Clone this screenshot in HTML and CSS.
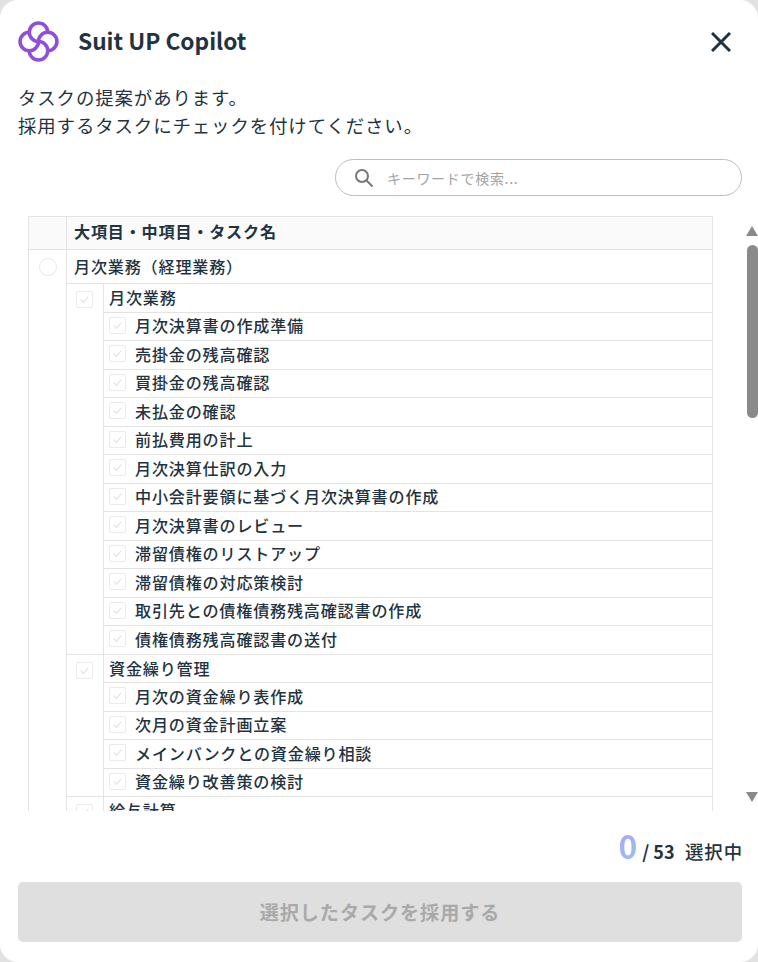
FILE: index.html
```html
<!DOCTYPE html>
<html lang="ja">
<head>
<meta charset="utf-8">
<title>Suit UP Copilot</title>
<link rel="stylesheet" href="styles.css">
</head>
<body>
<main class="modal">
  <header class="head">
    <svg class="logo" viewBox="0 0 40 40" fill="none" stroke="#8f4fdc" stroke-width="3.5" stroke-linecap="round">
      <path d="M29 11A9 9 0 1 0 20 20"/>
      <path d="M29 29A9 9 0 1 0 20 20"/>
      <path d="M11 29A9 9 0 1 0 20 20"/>
      <path d="M11 11A9 9 0 1 0 20 20"/>
    </svg>
    <h1 class="title">Suit UP Copilot</h1>
    <svg class="close" viewBox="0 0 20 20" fill="none" stroke="#1f3340" stroke-width="3"><path d="M1 1L19 19M19 1L1 19"/></svg>
  </header>
  <p class="lead">タスクの提案があります。<br>採用するタスクにチェックを付けてください。</p>
  <div class="search-row">
    <div class="search">
      <svg class="search-icon" viewBox="0 0 20 20" fill="none" stroke="#777" stroke-width="2"><circle cx="8" cy="8" r="6"/><path d="M12.5 12.5L18.5 18.5"/></svg>
      <span class="placeholder">キーワードで検索...</span>
    </div>
  </div>
  <div class="body">
    <div class="scroller">
      <div class="table">
        <div class="thead"><div class="th-blank"></div><div class="th">大項目・中項目・タスク名</div></div>
        <div class="major">
          <div class="major-check"><span class="radio"></span></div>
          <div class="major-body">
            <div class="major-title">月次業務（経理業務）</div>
            <div class="mid">
              <div class="mid-check"><span class="box"><svg viewBox="0 0 16 16"><path d="M4 8l3 3 5-6"/></svg></span></div>
              <div class="mid-body">
                <div class="mid-title">月次業務</div>
                <div class="task"><span class="box"><svg viewBox="0 0 16 16"><path d="M4 8l3 3 5-6"/></svg></span>月次決算書の作成準備</div>
                <div class="task"><span class="box"><svg viewBox="0 0 16 16"><path d="M4 8l3 3 5-6"/></svg></span>売掛金の残高確認</div>
                <div class="task"><span class="box"><svg viewBox="0 0 16 16"><path d="M4 8l3 3 5-6"/></svg></span>買掛金の残高確認</div>
                <div class="task"><span class="box"><svg viewBox="0 0 16 16"><path d="M4 8l3 3 5-6"/></svg></span>未払金の確認</div>
                <div class="task"><span class="box"><svg viewBox="0 0 16 16"><path d="M4 8l3 3 5-6"/></svg></span>前払費用の計上</div>
                <div class="task"><span class="box"><svg viewBox="0 0 16 16"><path d="M4 8l3 3 5-6"/></svg></span>月次決算仕訳の入力</div>
                <div class="task"><span class="box"><svg viewBox="0 0 16 16"><path d="M4 8l3 3 5-6"/></svg></span>中小会計要領に基づく月次決算書の作成</div>
                <div class="task"><span class="box"><svg viewBox="0 0 16 16"><path d="M4 8l3 3 5-6"/></svg></span>月次決算書のレビュー</div>
                <div class="task"><span class="box"><svg viewBox="0 0 16 16"><path d="M4 8l3 3 5-6"/></svg></span>滞留債権のリストアップ</div>
                <div class="task"><span class="box"><svg viewBox="0 0 16 16"><path d="M4 8l3 3 5-6"/></svg></span>滞留債権の対応策検討</div>
                <div class="task"><span class="box"><svg viewBox="0 0 16 16"><path d="M4 8l3 3 5-6"/></svg></span>取引先との債権債務残高確認書の作成</div>
                <div class="task"><span class="box"><svg viewBox="0 0 16 16"><path d="M4 8l3 3 5-6"/></svg></span>債権債務残高確認書の送付</div>
              </div>
            </div>
            <div class="mid">
              <div class="mid-check"><span class="box"><svg viewBox="0 0 16 16"><path d="M4 8l3 3 5-6"/></svg></span></div>
              <div class="mid-body">
                <div class="mid-title">資金繰り管理</div>
                <div class="task"><span class="box"><svg viewBox="0 0 16 16"><path d="M4 8l3 3 5-6"/></svg></span>月次の資金繰り表作成</div>
                <div class="task"><span class="box"><svg viewBox="0 0 16 16"><path d="M4 8l3 3 5-6"/></svg></span>次月の資金計画立案</div>
                <div class="task"><span class="box"><svg viewBox="0 0 16 16"><path d="M4 8l3 3 5-6"/></svg></span>メインバンクとの資金繰り相談</div>
                <div class="task"><span class="box"><svg viewBox="0 0 16 16"><path d="M4 8l3 3 5-6"/></svg></span>資金繰り改善策の検討</div>
              </div>
            </div>
            <div class="mid">
              <div class="mid-check"><span class="box"><svg viewBox="0 0 16 16"><path d="M4 8l3 3 5-6"/></svg></span></div>
              <div class="mid-body">
                <div class="mid-title">給与計算</div>
              </div>
            </div>
          </div>
        </div>
      </div>
    </div>
    <div class="scrollbar">
      <span class="arrow-up"></span>
      <span class="thumb"></span>
      <span class="arrow-down"></span>
    </div>
  </div>
  <div class="count"><span class="num">0</span><span class="total">/ 53</span><span class="selected">選択中</span></div>
  <button class="submit" type="button" disabled>選択したタスクを採用する</button>
</main>
</body>
</html>
```
FILE: styles.css
```css
* { box-sizing: border-box; }
html, body { margin: 0; height: 100%; }
body {
  background: #e2e2e2;
  font-family: "Noto Sans CJK JP", "Noto Sans", sans-serif;
  color: #1f3340;
}
.modal {
  width: 758px;
  height: 962px;
  background: #fff;
  border-radius: 18px;
  overflow: hidden;
  display: flex;
  flex-direction: column;
  padding: 0 16px 20px 18px;
}
.head {
  display: flex;
  align-items: center;
  height: 42px;
  margin-top: 20px;
}
.logo { width: 41px; height: 41px; flex: none; }
.title {
  margin: 0 0 0 19px;
  font-size: 22.7px;
  font-weight: 700;
  flex: 1;
  line-height: 1;
}
.close { width: 20px; height: 20px; margin: 1px 11px 0 0; }
.lead {
  margin: 21px 0 0;
  font-size: 18.4px;
  line-height: 28px;
  letter-spacing: 0.05em;
}
.search-row { display: flex; justify-content: flex-end; margin-top: 20px; }
.search {
  width: 407px;
  height: 37px;
  border: 1px solid #bdbdbd;
  border-radius: 19px;
  display: flex;
  align-items: center;
  padding-left: 18px;
}
.search-icon { width: 20px; height: 20px; flex: none; }
.placeholder {
  margin-left: 13px;
  font-size: 14px;
  letter-spacing: 0.05em;
  color: #a3a3a3;
}
.body {
  display: flex;
  margin: 20px -16px 0 10px;
  height: 595px;
}
.scroller { width: 685px; overflow: hidden; height: 595px; }
.table {
  border: 1px solid #e3e3e3;
  border-bottom: 0;
  font-size: 16.1px;
  letter-spacing: 0.05em;
  font-weight: 500;
}
.thead {
  display: flex;
  height: 33px;
  background: #fafafa;
  border-bottom: 1px solid #e3e3e3;
}
.th-blank { width: 38px; border-right: 1px solid #e3e3e3; }
.th { padding-left: 7px; line-height: 29px; font-weight: 700; }
.major { display: flex; }
.major-check {
  width: 38px;
  flex: none;
  border-right: 1px solid #e3e3e3;
  display: flex;
  justify-content: center;
  padding-top: 8px;
}
.radio {
  width: 18px;
  height: 18px;
  border: 1px solid #e8e8e8;
  border-radius: 50%;
}
.major-body { flex: 1; }
.major-title {
  height: 34px;
  line-height: 32px;
  padding-left: 7px;
  border-bottom: 1px solid #e3e3e3;
}
.mid { display: flex; border-bottom: 1px solid #e3e3e3; }
.mid-check {
  width: 37px;
  flex: none;
  border-right: 1px solid #e3e3e3;
  padding: 7px 0 0 9px;
}
.mid-body { flex: 1; }
.mid-title { height: 27.5px; line-height: 27px; padding-left: 5px; }
.task {
  height: 28.5px;
  border-top: 1px solid #e3e3e3;
  display: flex;
  align-items: center;
  padding: 0 0 2px 5px;
}
.box {
  width: 17px;
  height: 17px;
  border: 1px solid #ebebeb;
  border-radius: 2px;
  display: block;
  flex: none;
}
.task .box { margin-right: 9px; }
.box svg { display: block; width: 15px; height: 15px; fill: none; stroke: #e2e2e2; stroke-width: 1.2; }
.scrollbar {
  width: 12px;
  margin-left: 33px;
  display: flex;
  flex-direction: column;
  align-items: center;
}
.arrow-up {
  margin-top: 10px;
  border-left: 6px solid transparent;
  border-right: 6px solid transparent;
  border-bottom: 10px solid #8a8a8a;
}
.thumb {
  margin-top: 9px;
  width: 11px;
  height: 173px;
  border-radius: 6px;
  background: #8a8a8a;
}
.arrow-down {
  margin-top: auto;
  margin-bottom: 9px;
  border-left: 6px solid transparent;
  border-right: 6px solid transparent;
  border-top: 10px solid #8a8a8a;
}
.count {
  display: flex;
  justify-content: flex-end;
  align-items: baseline;
  margin-top: 14px;
  height: 41px;
}
.num {
  font-size: 32px;
  font-weight: 700;
  line-height: 41px;
  background: linear-gradient(135deg, #b09df5, #94c8f7);
  -webkit-background-clip: text;
  background-clip: text;
  color: transparent;
}
.total { font-size: 18px; font-weight: 700; margin-left: 5px; }
.selected { font-size: 18.4px; font-weight: 500; letter-spacing: 0.05em; margin-left: 10.5px; margin-right: -1px; }
.submit {
  margin-top: 16px;
  height: 60px;
  width: 724px;
  border: 0;
  border-radius: 5px;
  background: #dfdfdf;
  color: #a9a9a9;
  font-family: inherit;
  font-size: 19.1px;
  font-weight: 700;
  letter-spacing: 0.05em;
}
```
